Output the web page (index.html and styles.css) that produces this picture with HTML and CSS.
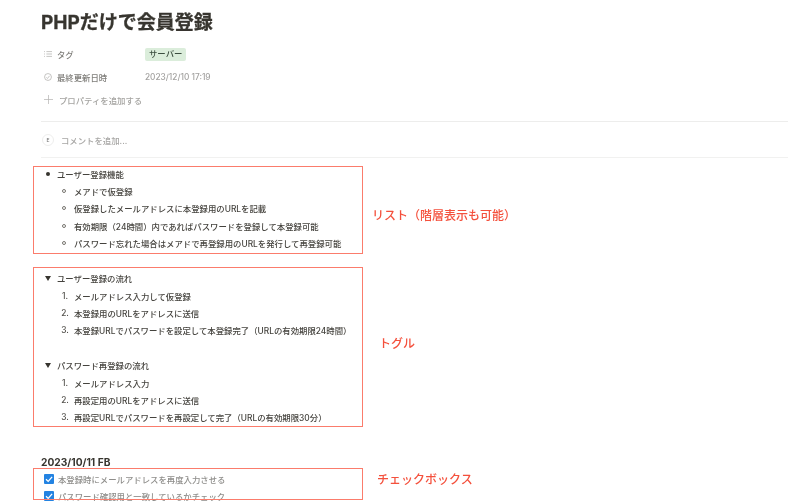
FILE: index.html
```html
<!DOCTYPE html>
<html lang="ja">

<head>
    <meta charset="UTF-8">
    <title>PHPだけで会員登録</title>
    <link rel="stylesheet" href="styles.css">
</head>

<body>
    <div class="page">
        <h1 class="title">PHPだけで会員登録</h1>

        <div class="props">
            <div class="prop">
                <div class="prop-name">
                    <svg class="prop-icon" viewBox="0 0 10 10"><path d="M3 2h7M3 5h7M3 8h7M0 2h1.200M0 5h1.200M0 8h1.200" /></svg>
                    タグ
                </div>
                <span class="tag">サーバー</span>
            </div>
            <div class="prop">
                <div class="prop-name">
                    <svg class="prop-icon" viewBox="0 0 10 10"><circle cx="5" cy="5" r="4.300" /><path d="M3 5.500l1.300 1.300 2.700-3.300" /></svg>
                    最終更新日時
                </div>
                <span class="prop-value">2023/12/10 17:19</span>
            </div>
            <div class="prop prop-add">
                <svg class="add-icon" viewBox="0 0 10 10"><path d="M5 0v10M0 5h10" /></svg>
                プロパティを追加する
            </div>
        </div>

        <div class="comment">
            <span class="avatar">E</span>
            コメントを追加...
        </div>

        <ul class="list">
            <li class="row"><span class="mark"><i class="dot"></i></span>ユーザー登録機能</li>
            <li class="row sub"><span class="mark"><i class="ring"></i></span>メアドで仮登録</li>
            <li class="row sub"><span class="mark"><i class="ring"></i></span>仮登録したメールアドレスに本登録用のURLを記載</li>
            <li class="row sub"><span class="mark"><i class="ring"></i></span>有効期限（24時間）内であればパスワードを登録して本登録可能</li>
            <li class="row sub"><span class="mark"><i class="ring"></i></span>パスワード忘れた場合はメアドで再登録用のURLを発行して再登録可能</li>
        </ul>

        <div class="toggle first">
            <div class="row"><span class="mark"><i class="arrow"></i></span>ユーザー登録の流れ</div>
            <div class="row sub"><span class="mark num">1.</span>メールアドレス入力して仮登録</div>
            <div class="row sub"><span class="mark num">2.</span>本登録用のURLをアドレスに送信</div>
            <div class="row sub"><span class="mark num">3.</span>本登録URLでパスワードを設定して本登録完了（URLの有効期限24時間）</div>
        </div>

        <div class="toggle second">
            <div class="row"><span class="mark"><i class="arrow"></i></span>パスワード再登録の流れ</div>
            <div class="row sub"><span class="mark num">1.</span>メールアドレス入力</div>
            <div class="row sub"><span class="mark num">2.</span>再設定用のURLをアドレスに送信</div>
            <div class="row sub"><span class="mark num">3.</span>再設定URLでパスワードを再設定して完了（URLの有効期限30分）</div>
        </div>

        <h3 class="date">2023/10/11 FB</h3>

        <div class="check-row">
            <span class="check"><svg viewBox="0 0 10 10"><path d="M2 5.200l2.200 2.200 3.900-4.600" /></svg></span>
            本登録時にメールアドレスを再度入力させる
        </div>
        <div class="check-row">
            <span class="check"><svg viewBox="0 0 10 10"><path d="M2 5.200l2.200 2.200 3.900-4.600" /></svg></span>
            パスワード確認用と一致しているかチェック
        </div>
    </div>

    <!-- 赤枠と注釈はスクショの上に載っている -->
    <div class="red-box box-list"></div>
    <div class="red-box box-toggle"></div>
    <div class="red-box box-check"></div>
    <div class="note note-list">リスト（階層表示も可能）</div>
    <div class="note note-toggle">トグル</div>
    <div class="note note-check">チェックボックス</div>
</body>

</html>
```

FILE: styles.css
```css
* {
    box-sizing: border-box;
}

html,
body {
    margin: 0;
    height: 503px;
    overflow: hidden;
    background-color: #fff;
}

body {
    position: relative;
    font-family: Inter, "Noto Sans CJK JP", sans-serif;
    font-size: 8.400px;
    font-weight: 500;
    color: #37352f;
    /* 元画像は縮小でにじんでいる */
    filter: blur(0.3px);
}

.page {
    padding: 10px 12px 0 41px;
}

.title {
    margin: 0;
    height: 26px;
    font-size: 19px;
    line-height: 26px;
    font-weight: 700;
    -webkit-text-stroke: 0.3px #37352f;
}

.props {
    margin-top: 7px;
    border-bottom: 1px solid #ededec;
    height: 79px;
}

.prop {
    display: flex;
    align-items: center;
    height: 22.800px;
    color: #91908c;
}

.prop-name {
    display: flex;
    align-items: center;
    gap: 5px;
    width: 104px;
    padding-left: 3px;
    color: #7f7e7a;
}

.prop-icon {
    width: 8px;
    height: 8px;
    fill: none;
    stroke: #a5a4a1;
    stroke-width: 0.800;
}

.tag {
    padding: 0 4px;
    height: 13px;
    line-height: 13px;
    border-radius: 2px;
    background-color: #dbeddb;
    color: #3b4d3f;
}

.prop-value {
    color: #a3a2a0;
    font-size: 8.300px;
}

.prop-add {
    gap: 6px;
    padding-left: 3px;
    color: #a5a4a1;
}

.add-icon {
    width: 9px;
    height: 9px;
    fill: none;
    stroke: #b5b4b2;
    stroke-width: 0.800;
}

.comment {
    display: flex;
    align-items: center;
    gap: 7px;
    height: 36px;
    padding-left: 1px;
    border-bottom: 1px solid #f1f1f0;
    color: #a8a7a5;
}

.avatar {
    width: 12px;
    height: 12px;
    border-radius: 50%;
    border: 1px solid #eeeeed;
    text-align: center;
    font-size: 5px;
    line-height: 10px;
    color: #777;
}

.list {
    margin: 7px 0 0;
    padding: 0;
    list-style: none;
}

.row {
    display: flex;
    align-items: center;
    height: 17.350px;
    padding-left: 16px;
    color: #45433e;
}

.row.sub {
    padding-left: 33px;
}

.mark {
    flex: none;
    display: flex;
    justify-content: center;
    align-items: center;
    width: 16px;
    margin-left: -16px;
    padding-right: 3px;
}

.row.sub .mark {
    margin-left: -17px;
    width: 17px;
    padding-right: 4px;
}

.row.sub .mark.num {
    padding-right: 1px;
}

.dot {
    width: 4px;
    height: 4px;
    border-radius: 50%;
    background-color: #37352f;
}

.ring {
    width: 4px;
    height: 4px;
    border-radius: 50%;
    border: 1px solid #77756f;
}

.arrow {
    width: 0;
    height: 0;
    border-left: 3px solid transparent;
    border-right: 3px solid transparent;
    border-top: 5px solid #37352f;
}

.num {
    color: #55534e;
}

.toggle.first {
    margin-top: 18px;
}

.toggle.second {
    margin-top: 17.500px;
}

.date {
    margin: 29px 0 0;
    height: 15px;
    font-size: 10.200px;
    line-height: 15px;
    font-weight: 700;
}

.check-row {
    display: flex;
    align-items: center;
    gap: 4px;
    height: 17.350px;
    padding-left: 3px;
    color: #8f8e8b;
}

.check {
    width: 10px;
    height: 10px;
    border-radius: 1px;
    background-color: #2383e2;
}

.check svg {
    display: block;
    fill: none;
    stroke: #fff;
    stroke-width: 1.300;
}

.red-box {
    position: absolute;
    left: 33px;
    width: 329.500px;
    border: 1.500px solid #fb7c6c;
}

.box-list {
    top: 166px;
    height: 88px;
}

.box-toggle {
    top: 267px;
    height: 160px;
}

.box-check {
    top: 468px;
    height: 32px;
}

.note {
    position: absolute;
    font-size: 12px;
    line-height: 16px;
    color: #f4503c;
}

.note-list {
    left: 372px;
    top: 208px;
}

.note-toggle {
    left: 379px;
    top: 336px;
}

.note-check {
    left: 377px;
    top: 472px;
}
```
